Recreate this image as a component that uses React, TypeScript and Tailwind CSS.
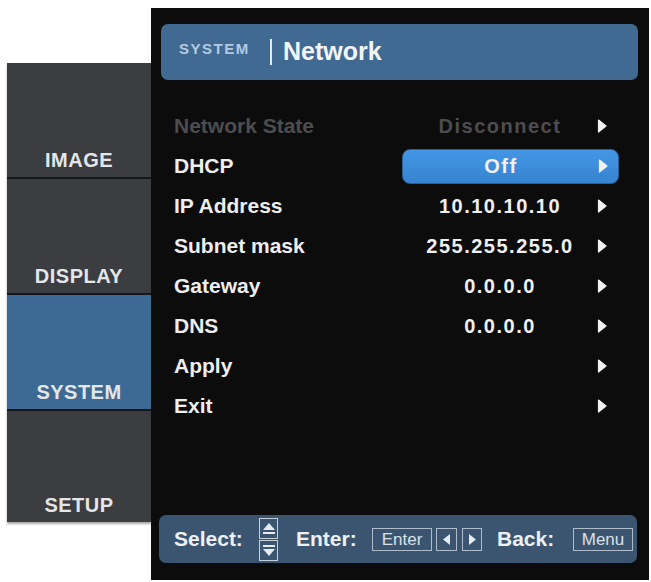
import React from 'react';

interface Row {
  label: string;
  value?: string;
  dim?: boolean;
  active?: boolean;
}

const rows: Row[] = [
  { label: 'Network State', value: 'Disconnect', dim: true },
  { label: 'DHCP', value: 'Off', active: true },
  { label: 'IP Address', value: '10.10.10.10' },
  { label: 'Subnet mask', value: '255.255.255.0' },
  { label: 'Gateway', value: '0.0.0.0' },
  { label: 'DNS', value: '0.0.0.0' },
  { label: 'Apply' },
  { label: 'Exit' },
];

const tabs = [
  { name: 'IMAGE', active: false, h: 'h-[114px]' },
  { name: 'DISPLAY', active: false, h: 'h-[114px]' },
  { name: 'SYSTEM', active: true, h: 'h-[114px]' },
  { name: 'SETUP', active: false, h: 'h-[111px]' },
];

const Arrow: React.FC = () => (
  <svg width="10" height="14" viewBox="0 0 10 14" className="block">
    <path d="M1.5 1 L9 7 L1.5 13 Z" fill="#f2f2f2" stroke="#f2f2f2" strokeWidth="1.2" strokeLinejoin="round" />
  </svg>
);

const KeyBox: React.FC<{ children: React.ReactNode; className?: string }> = ({ children, className }) => (
  <div
    className={`h-[23px] border-[1.5px] border-[#aebccb] flex items-center justify-center text-[17px] leading-none text-[#d9e0e7] ${className ?? ''}`}
  >
    {children}
  </div>
);

const App: React.FC = () => {
  return (
    <div
      className="w-[651px] h-[582px] bg-white flex items-start pl-[7px] pt-[8px]"
      style={{ fontFamily: '"Liberation Sans", Arial, sans-serif' }}
    >
      {/* side tabs */}
      <div className="mt-[55px] w-[144px] flex flex-col bg-[#161718] gap-[2px] shadow-[0_2px_2px_rgba(0,0,0,0.35)]">
        {tabs.map((t) => (
          <div
            key={t.name}
            className={`${t.h} flex items-end justify-center pb-[6px] ${t.active ? 'bg-[#3d6a94]' : 'bg-[#3b3d40]'}`}
          >
            <span className="text-[20px] font-bold text-[#e4e6e8] tracking-[0.5px] leading-[22px]">{t.name}</span>
          </div>
        ))}
      </div>

      {/* main panel */}
      <div className="w-[498px] h-[572px] bg-[#0c0c0d] flex flex-col">
        <div className="mt-[16px] ml-[10px] mr-[11px] h-[56px] rounded-[7px] bg-[#416a92] flex items-center pl-[18px]">
          <span className="w-[75px] text-[15px] font-bold text-[#b3cbe2] tracking-[1.5px] mb-[5px]">SYSTEM</span>
          <span className="ml-[16px] w-[2px] h-[26px] bg-[#dfe9f3]" />
          <span className="ml-[11px] text-[25px] font-bold text-[#f2f5f8]">Network</span>
        </div>

        <div className="mt-[26px] flex flex-col">
          {rows.map((r) => (
            <div key={r.label} className="h-[40px] flex items-center">
              <div
                className={`w-[251px] pl-[23px] text-[21px] font-bold ${r.dim ? 'text-[#4d4d4f]' : 'text-[#eeeeee]'}`}
              >
                {r.label}
              </div>
              <div
                className={`w-[217px] h-[35px] flex items-center rounded-[8px] ${
                  r.active ? 'bg-gradient-to-b from-[#4496e4] to-[#3684d2] border border-[#2a5f94]' : ''
                }`}
              >
                <div
                  className={`ml-[6px] w-[184px] text-center text-[20px] font-bold tracking-[1.5px] ${
                    r.dim ? 'text-[#4d4d4f]' : 'text-[#f0f0f0]'
                  }`}
                >
                  {r.value ?? ''}
                </div>
                <div className="ml-[5px]">
                  <Arrow />
                </div>
              </div>
            </div>
          ))}
        </div>

        {/* help bar */}
        <div className="mt-auto mb-[17px] ml-[8px] mr-[12px] h-[48px] rounded-[7px] bg-[#3b5570] flex items-center pl-[15px] font-bold text-[21px] text-[#eef1f4]">
          <span className="w-[70px]">Select:</span>
          <div className="ml-[15px] flex flex-col gap-[1px]">
            <div className="w-[19px] h-[21px] border-[1.5px] border-[#c5d0da] flex flex-col items-center justify-center gap-[2px]">
              <svg width="12" height="7" viewBox="0 0 12 7">
                <path d="M6 0 L12 7 L0 7 Z" fill="#e6ebf0" />
              </svg>
              <div className="w-[12px] h-[2px] bg-[#e6ebf0]" />
            </div>
            <div className="w-[19px] h-[21px] border-[1.5px] border-[#c5d0da] flex flex-col items-center justify-center gap-[2px]">
              <div className="w-[12px] h-[2px] bg-[#e6ebf0]" />
              <svg width="12" height="7" viewBox="0 0 12 7">
                <path d="M0 0 L12 0 L6 7 Z" fill="#e6ebf0" />
              </svg>
            </div>
          </div>
          <span className="ml-[18px] w-[53px]">Enter:</span>
          <KeyBox className="ml-[23px] w-[60px] font-normal">Enter</KeyBox>
          <KeyBox className="ml-[4px] w-[21px]">
            <svg width="8" height="11" viewBox="0 0 8 11">
              <path d="M7 0 L0 5.5 L7 11 Z" fill="#e6ebf0" />
            </svg>
          </KeyBox>
          <KeyBox className="ml-[5px] w-[20px]">
            <svg width="8" height="11" viewBox="0 0 8 11">
              <path d="M1 0 L8 5.5 L1 11 Z" fill="#e6ebf0" />
            </svg>
          </KeyBox>
          <span className="ml-[15px] w-[57px]">Back:</span>
          <KeyBox className="ml-[19px] w-[60px] font-normal">Menu</KeyBox>
        </div>
      </div>
    </div>
  );
};

export default App;
